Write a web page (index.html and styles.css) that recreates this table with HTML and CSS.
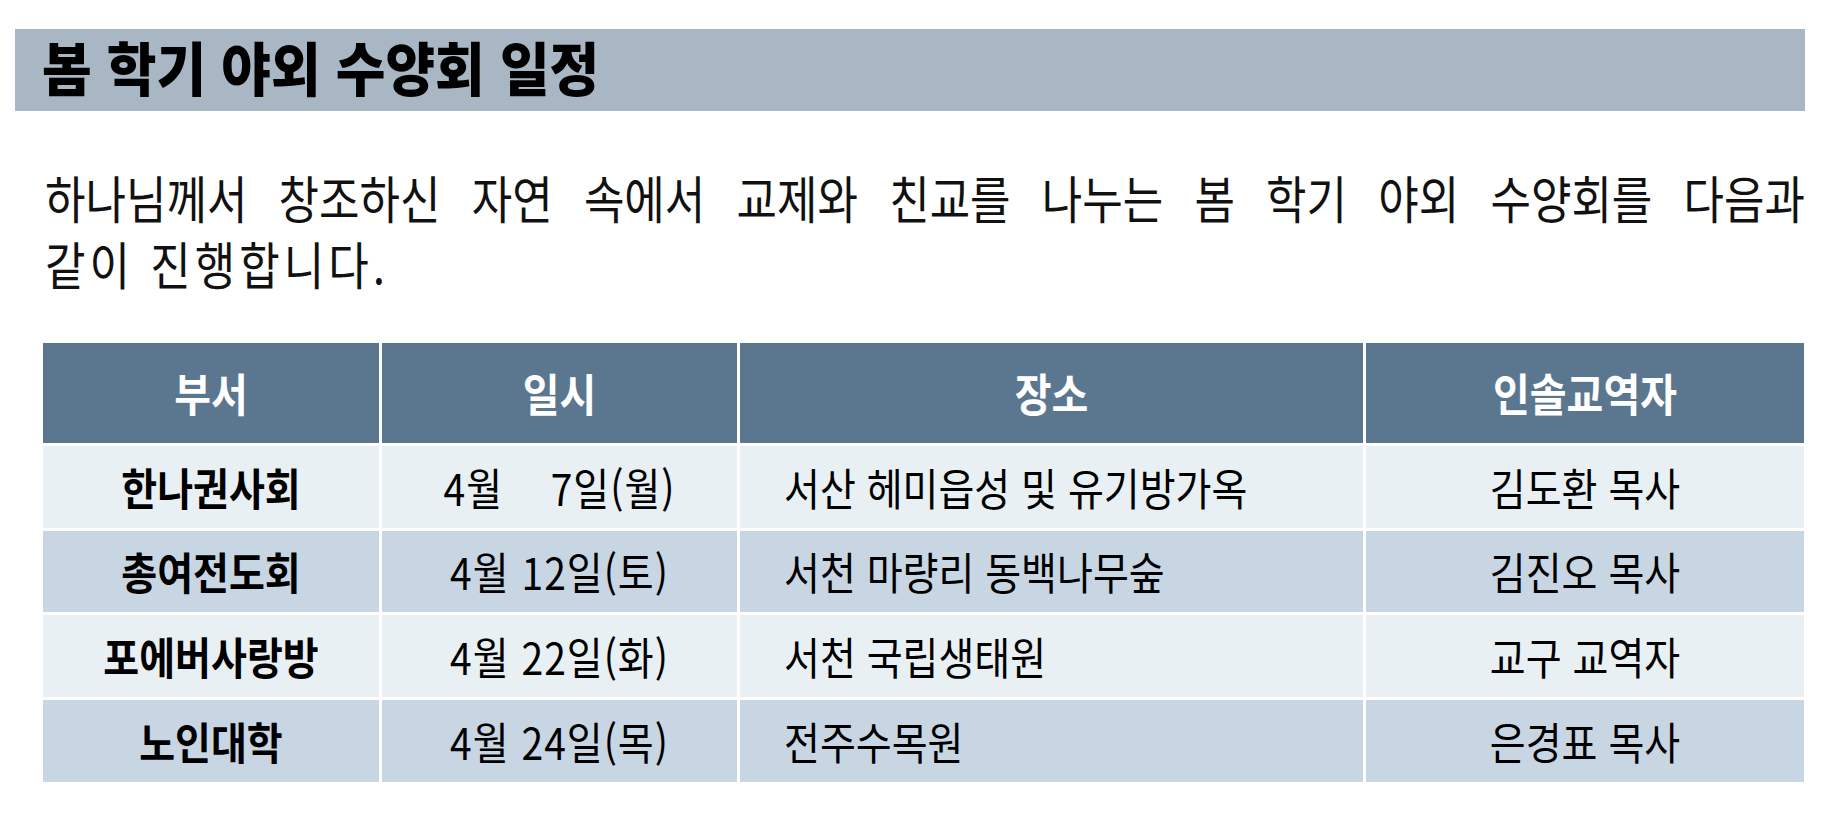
FILE: index.html
```html
<!DOCTYPE html>
<html lang="ko">
<head>
<meta charset="utf-8">
<title>봄 학기 야외 수양회 일정</title>
<link rel="stylesheet" href="styles.css">
</head>
<body>
<div class="page">
  <h1 class="title"><span class="title-text">봄 학기 야외 수양회 일정</span></h1>
  <div class="intro">
    <p class="line line-full">하나님께서 창조하신 자연 속에서 교제와 친교를 나누는 봄 학기 야외 수양회를 다음과</p>
    <p class="line line-last">같이 진행합니다.</p>
  </div>
  <div class="schedule">
    <div class="cell head"><span class="txt">부서</span></div>
    <div class="cell head"><span class="txt">일시</span></div>
    <div class="cell head"><span class="txt">장소</span></div>
    <div class="cell head"><span class="txt">인솔교역자</span></div>

    <div class="cell light dept"><span class="txt">한나권사회</span></div>
    <div class="cell light date"><span class="txt">4월&nbsp;&nbsp;&nbsp; 7일(월)</span></div>
    <div class="cell light place"><span class="txt">서산 헤미읍성 및 유기방가옥</span></div>
    <div class="cell light"><span class="txt">김도환 목사</span></div>

    <div class="cell dark dept"><span class="txt">총여전도회</span></div>
    <div class="cell dark date"><span class="txt">4월 12일(토)</span></div>
    <div class="cell dark place"><span class="txt">서천 마량리 동백나무숲</span></div>
    <div class="cell dark"><span class="txt">김진오 목사</span></div>

    <div class="cell light dept"><span class="txt">포에버사랑방</span></div>
    <div class="cell light date"><span class="txt">4월 22일(화)</span></div>
    <div class="cell light place"><span class="txt">서천 국립생태원</span></div>
    <div class="cell light"><span class="txt">교구 교역자</span></div>

    <div class="cell dark dept"><span class="txt">노인대학</span></div>
    <div class="cell dark date"><span class="txt">4월 24일(목)</span></div>
    <div class="cell dark place"><span class="txt">전주수목원</span></div>
    <div class="cell dark"><span class="txt">은경표 목사</span></div>
  </div>
</div>
</body>
</html>
```

FILE: styles.css
```css
html, body {
  margin: 0;
  padding: 0;
  background: #ffffff;
}

body {
  font-family: "Noto Sans CJK KR", "Noto Sans", sans-serif;
  color: #000000;
}

.page {
  width: 1840px;
  padding-top: 29px;
}

.title {
  margin: 0 35px 0 15px;
  height: 82px;
  box-sizing: border-box;
  padding: 0 0 8px 27px;
  background: #a9b7c5;
  font-size: 54px;
  font-weight: 900;
  line-height: 74px;
  color: #000000;
}

.title-text {
  display: inline-block;
  transform: scaleY(1.07);
}

.intro {
  margin: 58px 35px 0 45px;
}

.line {
  margin: 0;
  font-size: 44px;
  font-weight: 400;
  line-height: 56px;
  color: #111111;
  transform: scaleY(1.15);
}

.line + .line {
  margin-top: 10px;
}

.line-full {
  text-align: justify;
  text-align-last: justify;
}

.line-last {
  letter-spacing: 4px;
}

.schedule {
  margin: 52px 0 0 43px;
  width: 1761px;
  display: grid;
  grid-template-columns: 336px 355px 623px 438px;
  grid-template-rows: 100px 82px 81px 82px 82px;
  gap: 3px;
  background: #ffffff;
}

.cell {
  display: flex;
  align-items: center;
  justify-content: center;
  font-size: 39px;
  line-height: 1;
  color: #000000;
}

.txt {
  display: inline-block;
  transform: scaleY(1.13);
  white-space: nowrap;
}

.head {
  background: #5b7790;
  color: #ffffff;
  font-size: 40px;
  font-weight: 700;
}

.light {
  background: #e9f0f4;
}

.dark {
  background: #c8d6e3;
}

.dept {
  font-weight: 700;
}

.date {
  letter-spacing: 1px;
}

.place {
  justify-content: flex-start;
  padding-left: 44px;
}
```
